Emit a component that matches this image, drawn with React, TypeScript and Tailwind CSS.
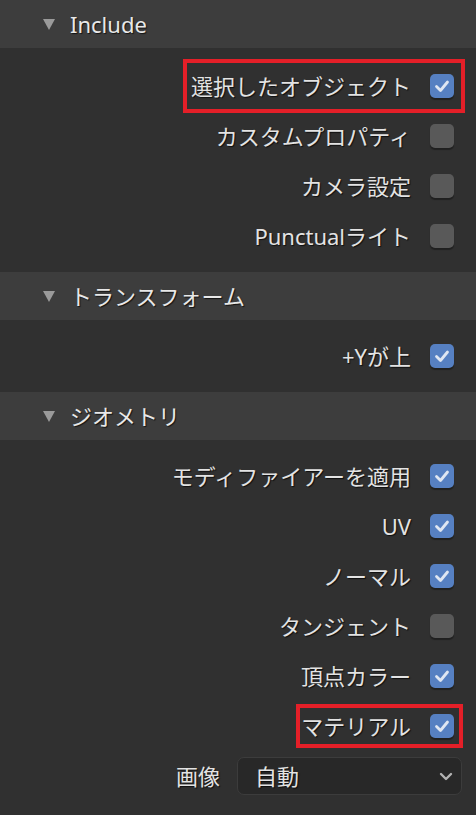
import React from "react";

const font = "font-['Noto_Sans','Noto_Sans_CJK_JP',sans-serif]";
const shadow = "[text-shadow:1px_1px_1px_rgba(0,0,0,0.7)]";

function Header({ title }: { title: string }) {
  return (
    <div className="flex h-12 items-center bg-[#3d3d3d]">
      <svg width="12" height="12" viewBox="0 0 12 12" className="ml-[43px]">
        <polygon points="0,1 12,1 6,12" fill="#9a9a9a" />
      </svg>
      <span className={`ml-[15px] text-[22px] text-[#e8e8e8] ${shadow}`}>{title}</span>
    </div>
  );
}

function Check({ on }: { on: boolean }) {
  return (
    <div
      className={`flex h-6 w-6 items-center justify-center rounded-[5px] shadow-[0_2px_1px_rgba(0,0,0,0.35)] ${
        on ? "bg-[#5680c2]" : "bg-[#595959]"
      }`}
    >
      {on && (
        <svg width="18" height="18" viewBox="0 0 18 18">
          <polyline points="3.5,9.5 7.5,13.5 14.5,5" fill="none" stroke="#dfe6f2" strokeWidth="2.8" strokeLinecap="round" strokeLinejoin="round" />
        </svg>
      )}
    </div>
  );
}

function Row({ label, on, mark }: { label: string; on: boolean; mark?: "a" | "b" }) {
  return (
    <div className="relative flex h-[50px] items-center justify-end gap-[19px] pr-[22px]">
      {mark === "a" && <div className="absolute left-[183px] top-[-2px] h-[54px] w-[282px] border-4 border-[#e41f28]" />}
      {mark === "b" && <div className="absolute left-[296px] top-[3px] h-[44px] w-[167px] border-4 border-[#e41f28]" />}
      <span className={`text-[22px] text-[#e3e3e3] ${shadow}`}>{label}</span>
      <Check on={on} />
    </div>
  );
}

export default function App() {
  return (
    <div className={`h-[815px] w-[476px] overflow-hidden bg-[#303030] ${font}`}>
      <Header title="Include" />
      <div className="pt-[13px] pb-[11px]">
        <Row label="選択したオブジェクト" on mark="a" />
        <Row label="カスタムプロパティ" on={false} />
        <Row label="カメラ設定" on={false} />
        <Row label="Punctualライト" on={false} />
      </div>
      <Header title="トランスフォーム" />
      <div className="pt-[11px] pb-[11px]">
        <Row label="+Yが上" on />
      </div>
      <Header title="ジオメトリ" />
      <div className="pt-[11px]">
        <Row label="モディファイアーを適用" on />
        <Row label="UV" on />
        <Row label="ノーマル" on />
        <Row label="タンジェント" on={false} />
        <Row label="頂点カラー" on />
        <Row label="マテリアル" on mark="b" />
        <div className="flex h-[50px] items-center justify-end gap-[17px] pr-[14px]">
          <span className={`text-[22px] text-[#e3e3e3] ${shadow}`}>画像</span>
          <div className="flex h-[38px] w-[225px] items-center justify-between rounded-[7px] border border-[#3c3c3c] bg-[#282828] pl-[17px] pr-[8px]">
            <span className={`text-[22px] text-[#e3e3e3] ${shadow}`}>自動</span>
            <svg width="14" height="14" viewBox="0 0 14 14">
              <polyline points="2,5 7,10 12,5" fill="none" stroke="#b3b3b3" strokeWidth="2.4" strokeLinecap="round" strokeLinejoin="round" />
            </svg>
          </div>
        </div>
      </div>
    </div>
  );
}
